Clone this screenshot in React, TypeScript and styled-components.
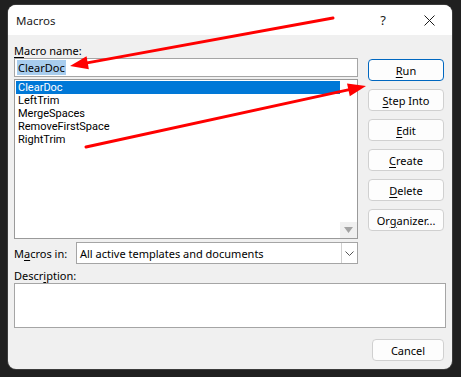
import React from "react";
import styled, { createGlobalStyle } from "styled-components";

const Global = createGlobalStyle`
  html, body { margin: 0; padding: 0; background: #202020; }
  body { font-family: "Noto Sans", "Segoe UI", sans-serif; font-size: 11px; color: #000; }
  * { box-sizing: border-box; }
`;

const Page = styled.div`
  position: relative;
  width: 461px;
  height: 377px;
  padding: 5px 9px 8px 8px;
`;

const Dialog = styled.div`
  width: 444px;
  height: 364px;
  background: #f0f0f0;
  border-radius: 8px;
  overflow: hidden;
  display: flex;
  flex-direction: column;
  box-shadow: 0 0 0 1px #3c3c3c;
`;

const TitleBar = styled.div`
  height: 30px;
  background: #ffffff;
  display: flex;
  align-items: center;
  padding-left: 8px;
`;

const Title = styled.div`
  flex: 1;
  font-size: 11.5px;
  color: #1a1a1a;
`;

const TitleButton = styled.div`
  width: 46px;
  height: 30px;
  display: flex;
  align-items: center;
  justify-content: center;
  font-size: 13px;
  color: #1a1a1a;
`;

const Body = styled.div`
  flex: 1;
  display: flex;
  flex-direction: column;
  padding: 8px 6px 8px 6px;
`;

const TopGrid = styled.div`
  display: grid;
  grid-template-columns: 344px 76px;
  column-gap: 10px;
`;

const LeftCol = styled.div`
  display: flex;
  flex-direction: column;
`;

const RightCol = styled.div`
  display: flex;
  flex-direction: column;
  gap: 8px;
  padding-top: 16px;
`;

const Label = styled.div`
  height: 15px;
  line-height: 15px;
  white-space: nowrap;
`;

const Key = styled.span`
  text-decoration: underline;
  text-underline-offset: 2px;
`;

const NameInput = styled.div`
  height: 19px;
  background: #fff;
  border: 1px solid #a5a5a5;
  padding: 1px 2px;
  display: flex;
  align-items: center;
`;

const Selected = styled.span`
  background: #a8cdee;
  line-height: 15px;
  padding: 0 1px;
`;

const List = styled.div`
  margin-top: 2px;
  height: 160px;
  background: #fff;
  border: 1px solid #9a9a9a;
  display: flex;
`;

const Items = styled.div`
  flex: 1;
  padding: 1px 0 0 1px;
`;

const Item = styled.div<{ $active?: boolean }>`
  height: 13px;
  line-height: 13px;
  padding-left: 2px;
  font-family: Roboto, "Noto Sans", sans-serif;
  font-size: 11px;
  background: ${(p) => (p.$active ? "#0078d7" : "transparent")};
  color: ${(p) => (p.$active ? "#fff" : "#000")};
`;

const ScrollBar = styled.div`
  width: 17px;
  display: flex;
  flex-direction: column;
  justify-content: flex-end;
`;

const ScrollButton = styled.div`
  height: 16px;
  background: #f0f0f0;
  display: flex;
  align-items: center;
  justify-content: center;
`;

const ComboRow = styled.div`
  margin-top: 3px;
  display: flex;
  align-items: center;
  height: 22px;
`;

const ComboLabel = styled.div`
  width: 62px;
  white-space: nowrap;
`;

const Combo = styled.div`
  flex: 1;
  height: 22px;
  background: #fff;
  border: 1px solid #a5a5a5;
  display: flex;
  align-items: center;
`;

const ComboText = styled.div`
  flex: 1;
  padding-left: 3px;
`;

const ComboButton = styled.div`
  width: 16px;
  height: 20px;
  border-left: 1px solid #d0d0d0;
  display: flex;
  align-items: center;
  justify-content: center;
`;

const Button = styled.div<{ $default?: boolean }>`
  height: 22px;
  background: #fdfdfd;
  border: 1px solid ${(p) => (p.$default ? "#0067c0" : "#d0d0d0")};
  border-radius: 4px;
  display: flex;
  align-items: center;
  justify-content: center;
  white-space: nowrap;
`;

const DescLabel = styled(Label)`
  margin-top: 4px;
`;

const DescBox = styled.div`
  height: 45px;
  background: #fff;
  border: 1px solid #a5a5a5;
`;

const Footer = styled.div`
  margin-top: 11px;
  display: flex;
  justify-content: flex-end;
  padding-right: 2px;
`;

const CancelButton = styled(Button)`
  width: 72px;
`;

const Overlay = styled.svg`
  position: absolute;
  left: 0;
  top: 0;
  pointer-events: none;
`;

function Arrow({ x1, y1, x2, y2 }: { x1: number; y1: number; x2: number; y2: number }) {
  const dx = x2 - x1;
  const dy = y2 - y1;
  const len = Math.hypot(dx, dy);
  const ux = dx / len;
  const uy = dy / len;
  const hl = 18;
  const hw = 6.5;
  const bx = x2 - ux * hl;
  const by = y2 - uy * hl;
  const px = -uy * hw;
  const py = ux * hw;
  return (
    <g>
      <line x1={x1} y1={y1} x2={bx + ux * 2} y2={by + uy * 2} stroke="#ff0000" strokeWidth={3} strokeLinecap="round" />
      <polygon points={`${x2},${y2} ${bx + px},${by + py} ${bx - px},${by - py}`} fill="#ff0000" />
    </g>
  );
}

const items = ["ClearDoc", "LeftTrim", "MergeSpaces", "RemoveFirstSpace", "RightTrim"];

export default function App() {
  return (
    <>
      <Global />
      <Page>
        <Dialog>
          <TitleBar>
            <Title>Macros</Title>
            <TitleButton>?</TitleButton>
            <TitleButton>
              <svg width="11" height="11" viewBox="0 0 11 11">
                <path d="M0.5 0.5 L10.5 10.5 M10.5 0.5 L0.5 10.5" stroke="#1a1a1a" strokeWidth="1" />
              </svg>
            </TitleButton>
          </TitleBar>
          <Body>
            <TopGrid>
              <LeftCol>
                <Label>
                  <Key>M</Key>acro name:
                </Label>
                <NameInput>
                  <Selected>ClearDoc</Selected>
                </NameInput>
                <List>
                  <Items>
                    {items.map((it, i) => (
                      <Item key={it} $active={i === 0}>
                        {it}
                      </Item>
                    ))}
                  </Items>
                  <ScrollBar>
                    <ScrollButton>
                      <svg width="9" height="6" viewBox="0 0 9 6">
                        <polygon points="0,0 9,0 4.5,6" fill="#a3a3a3" />
                      </svg>
                    </ScrollButton>
                  </ScrollBar>
                </List>
                <ComboRow>
                  <ComboLabel>
                    M<Key>a</Key>cros in:
                  </ComboLabel>
                  <Combo>
                    <ComboText>All active templates and documents</ComboText>
                    <ComboButton>
                      <svg width="9" height="5" viewBox="0 0 9 5">
                        <path d="M0.5 0.5 L4.5 4.5 L8.5 0.5" stroke="#555" strokeWidth="1" fill="none" />
                      </svg>
                    </ComboButton>
                  </Combo>
                </ComboRow>
              </LeftCol>
              <RightCol>
                <Button $default>
                  <Key>R</Key>un
                </Button>
                <Button>
                  <Key>S</Key>tep Into
                </Button>
                <Button>
                  <Key>E</Key>dit
                </Button>
                <Button>
                  <Key>C</Key>reate
                </Button>
                <Button>
                  <Key>D</Key>elete
                </Button>
                <Button>
                  Or<Key>g</Key>anizer...
                </Button>
              </RightCol>
            </TopGrid>
            <DescLabel>
              Descr<Key>i</Key>ption:
            </DescLabel>
            <DescBox />
            <Footer>
              <CancelButton>Cancel</CancelButton>
            </Footer>
          </Body>
        </Dialog>
        <Overlay width="461" height="377" viewBox="0 0 461 377">
          <Arrow x1={333} y1={18} x2={70} y2={66} />
          <Arrow x1={86} y1={147} x2={366} y2={86} />
        </Overlay>
      </Page>
    </>
  );
}
